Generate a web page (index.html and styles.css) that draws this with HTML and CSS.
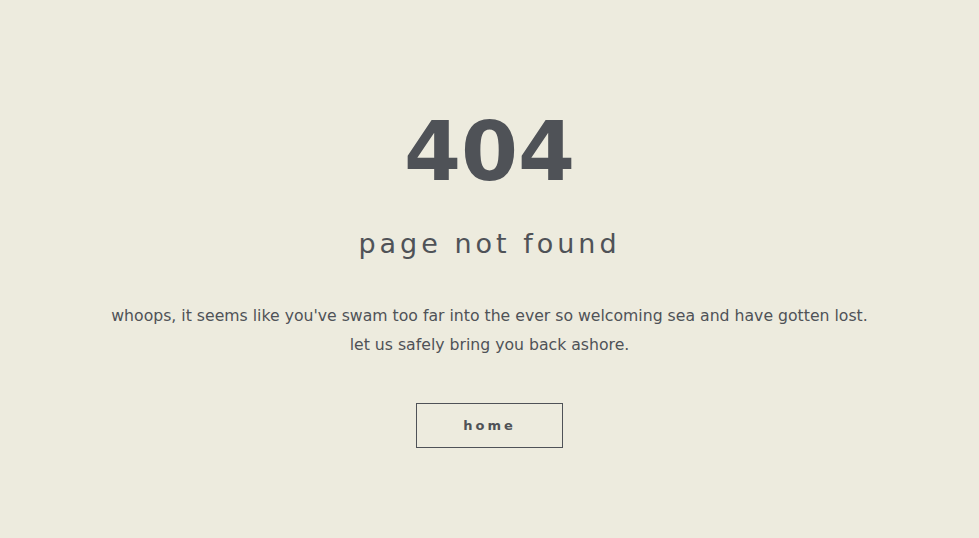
FILE: index.html
```html
<!DOCTYPE html>
<html lang="en">
<head>
<meta charset="utf-8">
<title>404 - page not found</title>
<link rel="stylesheet" href="styles.css">
</head>
<body>
<main class="page">
  <h1 class="code">404</h1>
  <h2 class="title">page not found</h2>
  <p class="message">whoops, it seems like you've swam too far into the ever so welcoming sea and have gotten lost.<br>let us safely bring you back ashore.</p>
  <a class="home-btn" href="#">home</a>
</main>
</body>
</html>
```

FILE: styles.css
```css
html, body {
  margin: 0;
  padding: 0;
  background: #edebde;
  height: 100%;
}
.page {
  display: flex;
  flex-direction: column;
  align-items: center;
  padding-top: 111px;
  font-family: "DejaVu Sans", sans-serif;
  color: #4f5257;
}
.code {
  margin: 0;
  font-size: 82px;
  line-height: 1;
  font-weight: 700;
  letter-spacing: 0;
}
.title {
  margin: 37px 0 0;
  font-size: 27px;
  line-height: 1;
  font-weight: 400;
  letter-spacing: 4px;
}
.message {
  margin: 44px 0 0;
  font-size: 15.7px;
  line-height: 29px;
  text-align: center;
}
.home-btn {
  margin-top: 44px;
  box-sizing: border-box;
  width: 147px;
  height: 45px;
  border: 1px solid #4f5257;
  display: flex;
  align-items: center;
  justify-content: center;
  color: #4f5257;
  text-decoration: none;
  font-size: 13px;
  font-weight: 700;
  letter-spacing: 3px;
}
```
